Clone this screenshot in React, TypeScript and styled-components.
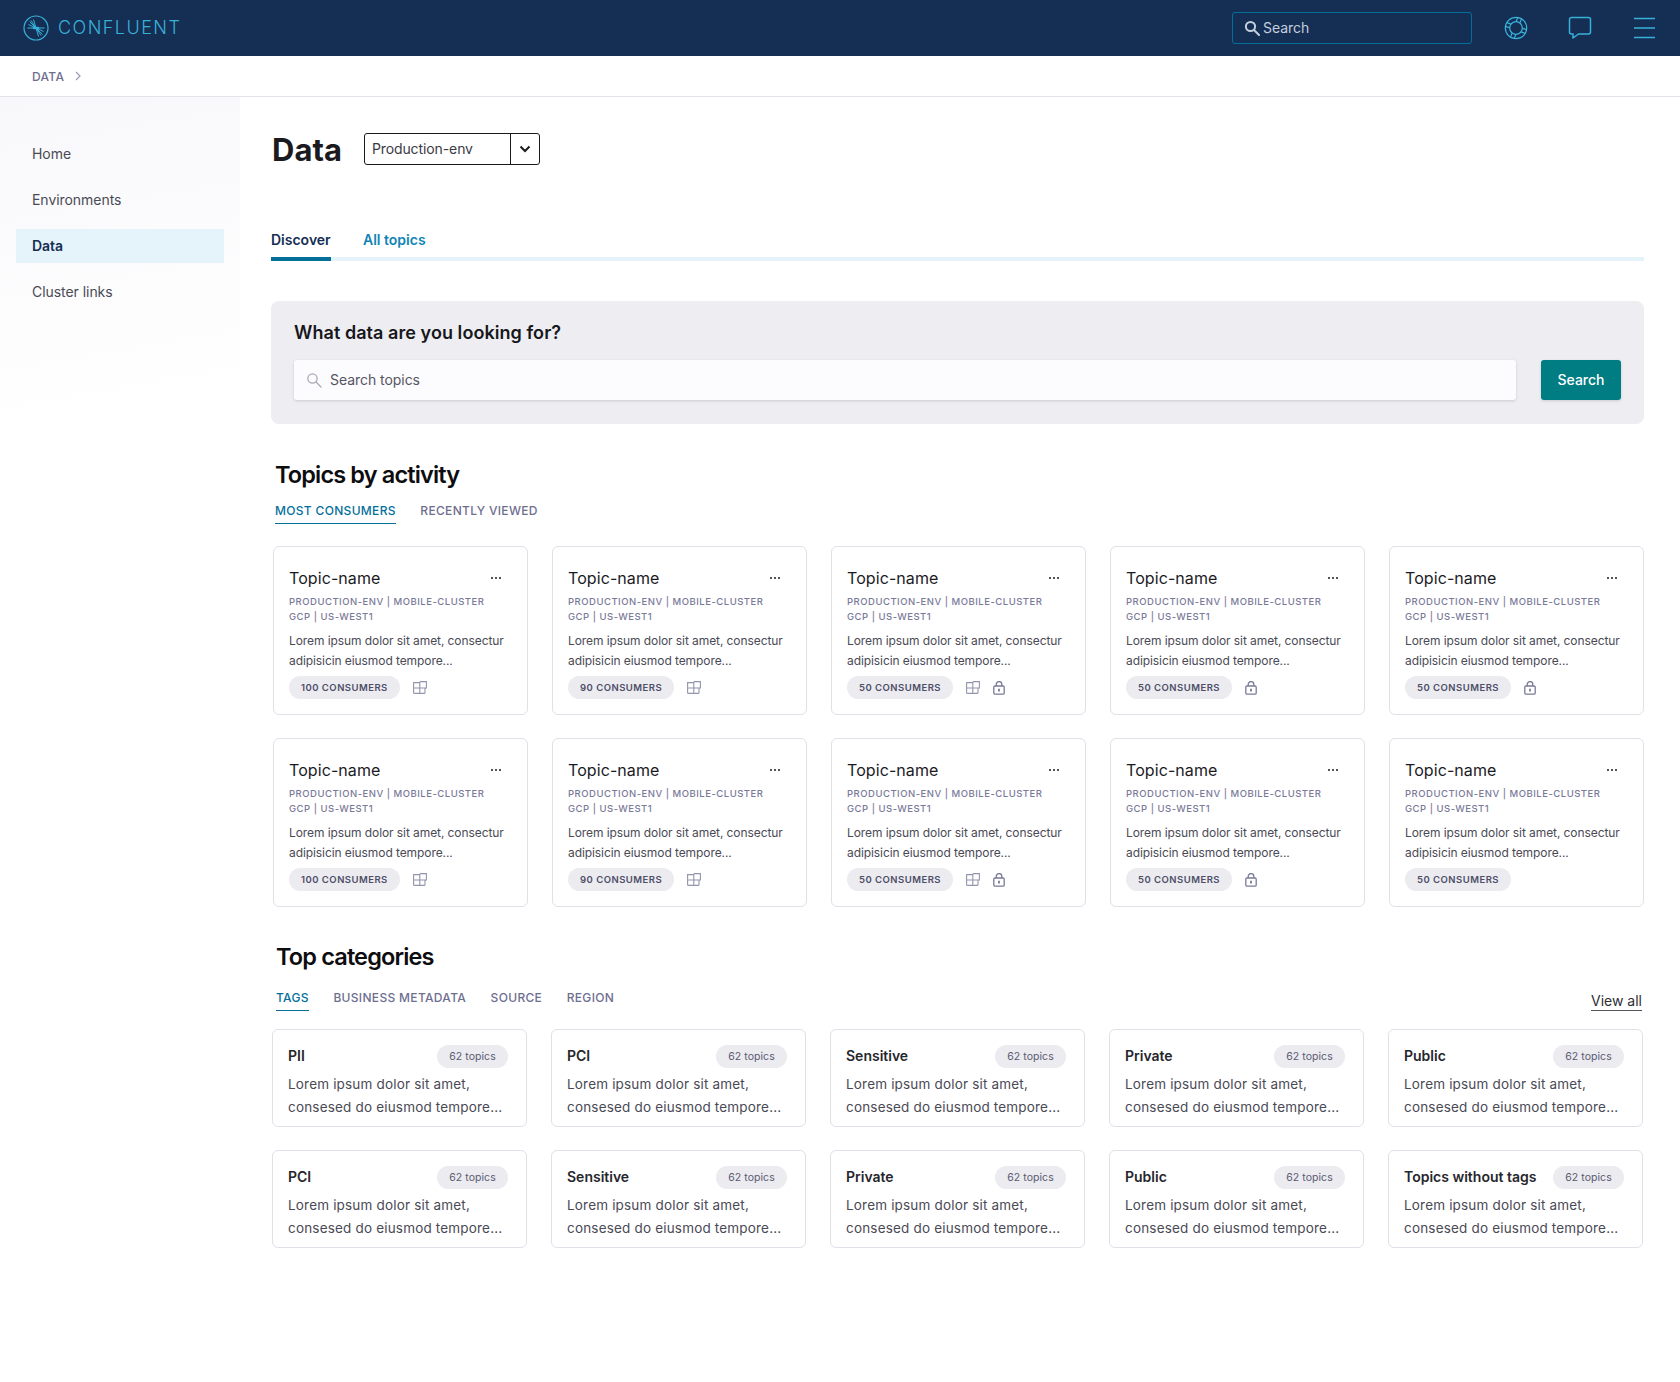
import React from "react";
import styled, { createGlobalStyle } from "styled-components";

const Global = createGlobalStyle`
  html, body { margin: 0; padding: 0; background: #fff; }
  body { font-family: Inter, "Noto Sans", sans-serif; color: #1b1b1f; -webkit-font-smoothing: antialiased; }
  * { box-sizing: border-box; }
`;

const Page = styled.div`
  width: 1680px;
  height: 1382px;
  display: flex;
  flex-direction: column;
  overflow: hidden;
`;
const Header = styled.header`
  height: 56px;
  flex: none;
  background: #152e54;
  display: flex;
  align-items: center;
  padding: 0 25px 0 23px;
`;
const Logo = styled.div`
  display: flex;
  align-items: center;
  gap: 9px;
  color: #38b1d9;
`;
const LogoText = styled.span`
  font-size: 18px;
  font-weight: 300;
  letter-spacing: 1.45px;
  line-height: 20px;
`;
const HeaderSearch = styled.div`
  margin-left: auto;
  width: 240px;
  height: 32px;
  border: 1px solid #04709a;
  border-radius: 3px;
  display: flex;
  align-items: center;
  gap: 3px;
  padding: 0 0 1px 11px;
  color: #c4cfde;
  font-size: 14px;
  letter-spacing: -0.05px;
`;
const HeaderIcons = styled.div`
  display: flex;
  align-items: center;
  margin-left: 32px;
  gap: 40px;
  color: #38b1d9;
`;
const BurgerSlot = styled.span`
  display: inline-flex;
  margin-left: 2px;
`;
const Crumbs = styled.div`
  height: 41px;
  flex: none;
  border-bottom: 1px solid #e3e3ea;
  display: flex;
  align-items: center;
  padding-left: 32px;
  gap: 10px;
  font-size: 12px;
  font-weight: 500;
  letter-spacing: 0.3px;
  color: #6e6e8f;
`;
const Body = styled.div`
  flex: 1;
  display: flex;
  min-height: 0;
`;
const Sidebar = styled.nav`
  width: 240px;
  flex: none;
  padding: 40px 16px 0;
  background: linear-gradient(170deg, #f8f8fb 0, #ffffff 340px);
`;
const NavItem = styled.div<{ $active?: boolean }>`
  height: 34px;
  margin-bottom: 12px;
  display: flex;
  align-items: center;
  padding: 0 0 2px 16px;
  font-size: 14px;
  letter-spacing: -0.05px;
  font-weight: ${(p) => (p.$active ? 600 : 400)};
  color: ${(p) => (p.$active ? "#152e54" : "#4a4a55")};
  background: ${(p) => (p.$active ? "#e5f4fb" : "transparent")};
`;
const Main = styled.main`
  flex: 1;
  min-width: 0;
  padding: 0 36px 0 31px;
`;
const TitleRow = styled.div`
  display: flex;
  align-items: center;
  height: 32px;
  margin-top: 36px;
`;
const Title = styled.h1`
  margin: 1px 0 0 1px;
  font-size: 31px;
  line-height: 32px;
  font-weight: 700;
  color: #1b1b1f;
`;
const Select = styled.div`
  margin-left: 22px;
  width: 176px;
  height: 32px;
  border: 1px solid #1b1b1f;
  border-radius: 3px;
  display: flex;
  font-size: 14px;
  letter-spacing: -0.1px;
  color: #3a3a44;
`;
const SelectValue = styled.div`
  flex: 1;
  display: flex;
  align-items: center;
  padding: 0 0 2px 7px;
`;
const SelectCaret = styled.div`
  width: 29px;
  border-left: 1px solid #1b1b1f;
  display: flex;
  align-items: center;
  justify-content: center;
  color: #1b1b1f;
`;
const MainTabs = styled.div`
  margin-top: 61px;
  display: flex;
  gap: 32px;
  height: 35px;
  border-bottom: 4px solid #e5f4fb;
`;
const MainTab = styled.div<{ $active?: boolean }>`
  width: ${(p) => (p.$active ? "60px" : "auto")};
  height: 35px;
  font-size: 14px;
  font-weight: 600;
  line-height: 20px;
  padding-top: 4px;
  color: ${(p) => (p.$active ? "#152e54" : "#0f85b5")};
  border-bottom: ${(p) => (p.$active ? "4px solid #04709a" : "none")};
`;
const SearchPanel = styled.section`
  margin-top: 40px;
  height: 123px;
  background: #eeeef2;
  border-radius: 8px;
  padding: 21px 23px 0;
`;
const PanelTitle = styled.h2`
  margin: 0;
  font-size: 18px;
  line-height: 22px;
  font-weight: 600;
  letter-spacing: 0.06px;
  color: #17171c;
`;
const PanelRow = styled.div`
  margin-top: 16px;
  display: flex;
  gap: 25px;
`;
const TopicInput = styled.div`
  flex: 1;
  height: 40px;
  background: #fcfcff;
  border-radius: 3px;
  box-shadow: 0 1px 3px rgba(40, 40, 70, 0.18);
  display: flex;
  align-items: center;
  padding: 0 0 1px 12px;
  gap: 8px;
  font-size: 14px;
  letter-spacing: -0.05px;
  color: #55555f;
`;
const InputIcon = styled.span`
  display: inline-flex;
  color: #a8a8b8;
`;
const SearchButton = styled.button`
  width: 80px;
  height: 40px;
  border: 0;
  border-radius: 3px;
  padding: 0 0 2px;
  background: #007c83;
  color: #fff;
  font: 500 14px Inter, sans-serif;
  box-shadow: 0 1px 3px rgba(40, 40, 70, 0.18);
`;
const SectionTitle = styled.h2<{ $top: number; $left: number }>`
  margin: ${(p) => p.$top}px 0 0 ${(p) => p.$left}px;
  font-size: 23.5px;
  line-height: 30px;
  font-weight: 600;
  letter-spacing: -0.85px;
  color: #0d0d10;
`;
const SubTabRow = styled.div<{ $left: number; $top: number }>`
  margin: ${(p) => p.$top}px 0 0 ${(p) => p.$left}px;
  display: flex;
  align-items: flex-start;
  gap: 24.5px;
  height: 24px;
`;
const SubTab = styled.div<{ $active?: boolean }>`
  height: 23px;
  line-height: 20px;
  font-size: 12px;
  font-weight: 500;
  letter-spacing: 0.32px;
  color: ${(p) => (p.$active ? "#04709a" : "#6e6e8f")};
  border-bottom: ${(p) => (p.$active ? "1.5px solid #04709a" : "none")};
`;
const ViewAll = styled.a`
  margin-left: auto;
  margin-right: 2px;
  margin-top: 5px;
  height: 18px;
  font-size: 14px;
  line-height: 16px;
  color: #2e2e36;
  border-bottom: 1px solid #55555f;
`;
const CardGrid = styled.div<{ $left: number; $top: number; $gap: number }>`
  margin: ${(p) => p.$top}px 0 0 ${(p) => p.$left}px;
  display: grid;
  grid-template-columns: repeat(5, 255px);
  column-gap: 24px;
  row-gap: ${(p) => p.$gap}px;
`;
const TopicCard = styled.article`
  height: 169px;
  border: 1px solid #e0e0e8;
  border-radius: 6px;
  padding: 19px 15px 0;
`;
const TopicHead = styled.div`
  display: flex;
  justify-content: space-between;
  align-items: center;
  height: 24px;
`;
const TopicName = styled.div`
  font-size: 16px;
  line-height: 24px;
  letter-spacing: 0.08px;
  color: #1b1b1f;
`;
const Dots = styled.div`
  display: flex;
  gap: 2px;
  margin-right: 11px;
  margin-top: -1px;
`;
const Dot = styled.span`
  width: 2px;
  height: 2px;
  background: #1b1b1f;
  border-radius: 50%;
`;
const Meta = styled.div`
  margin-top: 4px;
  font-size: 9.5px;
  line-height: 15px;
  font-weight: 500;
  letter-spacing: 0.5px;
  color: #7a7a99;
  white-space: nowrap;
`;
const Desc = styled.div`
  margin-top: 7px;
  font-size: 12px;
  line-height: 20px;
  letter-spacing: -0.08px;
  color: #4a4a55;
  white-space: nowrap;
`;
const TopicFoot = styled.div`
  margin-top: 5px;
  display: flex;
  align-items: center;
  color: #7a7a99;
`;
const Pill = styled.span`
  display: inline-flex;
  align-items: center;
  height: 23px;
  padding: 0 12px;
  border-radius: 12px;
  background: #ebebf0;
  font-size: 9.5px;
  font-weight: 600;
  letter-spacing: 0.48px;
  color: #4e4e68;
  white-space: nowrap;
`;
const FootIcon = styled.span`
  display: inline-flex;
  margin-left: 13px;
`;
const CategoryCard = styled.article`
  height: 98px;
  border: 1px solid #e0e0e8;
  border-radius: 6px;
  padding: 15px 15px 0;
`;
const CategoryHead = styled.div`
  display: flex;
  justify-content: space-between;
  align-items: center;
  height: 23px;
`;
const CategoryName = styled.div`
  font-size: 14px;
  font-weight: 600;
  margin-bottom: 2px;
  color: #26262c;
  white-space: nowrap;
`;
const TopicsPill = styled.span`
  height: 23px;
  width: 71px;
  margin-right: 3px;
  flex: none;
  display: flex;
  align-items: center;
  justify-content: center;
  border-radius: 12px;
  background: #ebebf0;
  font-size: 10.5px;
  letter-spacing: 0.05px;
  color: #5a5a72;
`;
const CategoryDesc = styled.div`
  margin-top: 5px;
  font-size: 13.5px;
  line-height: 22.5px;
  letter-spacing: 0.18px;
  color: #4a4a55;
  white-space: nowrap;
`;

const SearchGlyph = ({ size = 16, sw = 2 }: { size?: number; sw?: number }) => (
  <svg width={size} height={size} viewBox="0 0 16 16" fill="none" stroke="currentColor" strokeWidth={sw}>
    <circle cx="6.5" cy="6.5" r="4.6" />
    <path d="M10 10l5 5" strokeLinecap="round" />
  </svg>
);

const LogoMark = () => (
  <svg width="26" height="26" viewBox="0 0 26 26" fill="none" stroke="currentColor">
    <circle cx="13" cy="13" r="12" strokeWidth="1.2" />
    <path d="M13 13L6.5 6.5M13 13L8 5.5M13 13L10.5 4.5M13 13L5.5 9.5M13 13H4.5M13 13H21.5M13 13l6.5 6.5M13 13l5 7.5M13 13l2.5 8.5M13 13l7.5 3.5" strokeWidth="1" />
    <path d="M10 13h6" strokeWidth="2.4" />
  </svg>
);

const Buoy = () => (
  <svg width="24" height="24" viewBox="0 0 24 24" fill="none" stroke="currentColor" strokeWidth="1.2">
    <circle cx="12" cy="12" r="10.7" />
    <circle cx="12" cy="12" r="6.3" />
    <g transform="rotate(20 12 12)">
      <path d="M10 1.6v4.5M14 1.6v4.5M10 17.9v4.5M14 17.9v4.5M1.6 10h4.5M1.6 14h4.5M17.9 10h4.5M17.9 14h4.5" />
    </g>
  </svg>
);

const Chat = () => (
  <svg width="24" height="26" viewBox="0 0 24 26" fill="none" stroke="currentColor" strokeWidth="1.5">
    <path d="M3.5 2.5h17a2 2 0 0 1 2 2v12.5a2 2 0 0 1-2 2H10.5l-5.500 4v-4H3.500a2 2 0 0 1-2-2V4.500a2 2 0 0 1 2-2z" strokeLinejoin="round" />
  </svg>
);

const Burger = () => (
  <svg width="21" height="22" viewBox="0 0 21 22" fill="none" stroke="currentColor" strokeWidth="1.4">
    <path d="M0 1.5h21M0 11h21M0 20.5h21" />
  </svg>
);

const Chevron = () => (
  <svg width="8" height="10" viewBox="0 0 8 10" fill="none" stroke="#9a9ab0" strokeWidth="1.2">
    <path d="M2 1l4 4-4 4" />
  </svg>
);

const Caret = () => (
  <svg width="12" height="8" viewBox="0 0 12 8" fill="none" stroke="currentColor" strokeWidth="2">
    <path d="M1.5 1.5L6 6l4.5-4.5" />
  </svg>
);

const GridIcon = () => (
  <svg width="14" height="13" viewBox="0 0 14 13" fill="none" stroke="currentColor" strokeWidth="1.1" opacity=".8">
    <path d="M.6 1.6h6.2v10.8H1.600a1 1 0 0 1-1-1zM.6 7h11.400M6.800.6h6.600v6.400H12M12 7v4.400a1 1 0 0 1-1 1H6.800" />
  </svg>
);

const LockIcon = () => (
  <svg width="12" height="14" viewBox="0 0 12 14" fill="none" stroke="currentColor" strokeWidth="1.3">
    <rect x=".8" y="5" width="10.4" height="8.2" rx="1.2" />
    <path d="M3.2 5V3.4a2.8 2.8 0 0 1 5.6 0V5" />
    <path d="M6 7.8v2.6" strokeWidth="1.8" />
  </svg>
);

type Topic = { n: number; grid?: boolean; lock?: boolean };
const topics: Topic[] = [
  { n: 100, grid: true },
  { n: 90, grid: true },
  { n: 50, grid: true, lock: true },
  { n: 50, lock: true },
  { n: 50, lock: true },
  { n: 100, grid: true },
  { n: 90, grid: true },
  { n: 50, grid: true, lock: true },
  { n: 50, lock: true },
  { n: 50 },
];
const categories = ["PII", "PCI", "Sensitive", "Private", "Public", "PCI", "Sensitive", "Private", "Public", "Topics without tags"];

export default function App() {
  return (
    <Page>
      <Global />
      <Header>
        <Logo>
          <LogoMark />
          <LogoText>CONFLUENT</LogoText>
        </Logo>
        <HeaderSearch>
          <SearchGlyph />
          Search
        </HeaderSearch>
        <HeaderIcons>
          <Buoy />
          <Chat />
          <BurgerSlot>
            <Burger />
          </BurgerSlot>
        </HeaderIcons>
      </Header>
      <Crumbs>
        DATA <Chevron />
      </Crumbs>
      <Body>
        <Sidebar>
          <NavItem>Home</NavItem>
          <NavItem>Environments</NavItem>
          <NavItem $active>Data</NavItem>
          <NavItem>Cluster links</NavItem>
        </Sidebar>
        <Main>
          <TitleRow>
            <Title>Data</Title>
            <Select>
              <SelectValue>Production-env</SelectValue>
              <SelectCaret>
                <Caret />
              </SelectCaret>
            </Select>
          </TitleRow>
          <MainTabs>
            <MainTab $active>Discover</MainTab>
            <MainTab>All topics</MainTab>
          </MainTabs>
          <SearchPanel>
            <PanelTitle>What data are you looking for?</PanelTitle>
            <PanelRow>
              <TopicInput>
                <InputIcon>
                  <SearchGlyph size={16} sw={1.3} />
                </InputIcon>
                Search topics
              </TopicInput>
              <SearchButton>Search</SearchButton>
            </PanelRow>
          </SearchPanel>
          <SectionTitle $top={36} $left={4}>Topics by activity</SectionTitle>
          <SubTabRow $left={4} $top={11}>
            <SubTab $active>MOST CONSUMERS</SubTab>
            <SubTab>RECENTLY VIEWED</SubTab>
          </SubTabRow>
          <CardGrid $left={2} $top={21} $gap={23}>
            {topics.map((t, i) => (
              <TopicCard key={i}>
                <TopicHead>
                  <TopicName>Topic-name</TopicName>
                  <Dots>
                    <Dot />
                    <Dot />
                    <Dot />
                  </Dots>
                </TopicHead>
                <Meta>
                  PRODUCTION-ENV | MOBILE-CLUSTER
                  <br />
                  GCP | US-WEST1
                </Meta>
                <Desc>
                  Lorem ipsum dolor sit amet, consectur
                  <br />
                  adipisicin eiusmod tempore...
                </Desc>
                <TopicFoot>
                  <Pill>{t.n} CONSUMERS</Pill>
                  {t.grid && (
                    <FootIcon>
                      <GridIcon />
                    </FootIcon>
                  )}
                  {t.lock && (
                    <FootIcon>
                      <LockIcon />
                    </FootIcon>
                  )}
                </TopicFoot>
              </TopicCard>
            ))}
          </CardGrid>
          <SectionTitle $top={35} $left={5}>Top categories</SectionTitle>
          <SubTabRow $left={5} $top={16}>
            <SubTab $active>TAGS</SubTab>
            <SubTab>BUSINESS METADATA</SubTab>
            <SubTab>SOURCE</SubTab>
            <SubTab>REGION</SubTab>
            <ViewAll>View all</ViewAll>
          </SubTabRow>
          <CardGrid $left={1} $top={17} $gap={23}>
            {categories.map((c, i) => (
              <CategoryCard key={i}>
                <CategoryHead>
                  <CategoryName>{c}</CategoryName>
                  <TopicsPill>62 topics</TopicsPill>
                </CategoryHead>
                <CategoryDesc>
                  Lorem ipsum dolor sit amet,
                  <br />
                  consesed do eiusmod tempore...
                </CategoryDesc>
              </CategoryCard>
            ))}
          </CardGrid>
        </Main>
      </Body>
    </Page>
  );
}
